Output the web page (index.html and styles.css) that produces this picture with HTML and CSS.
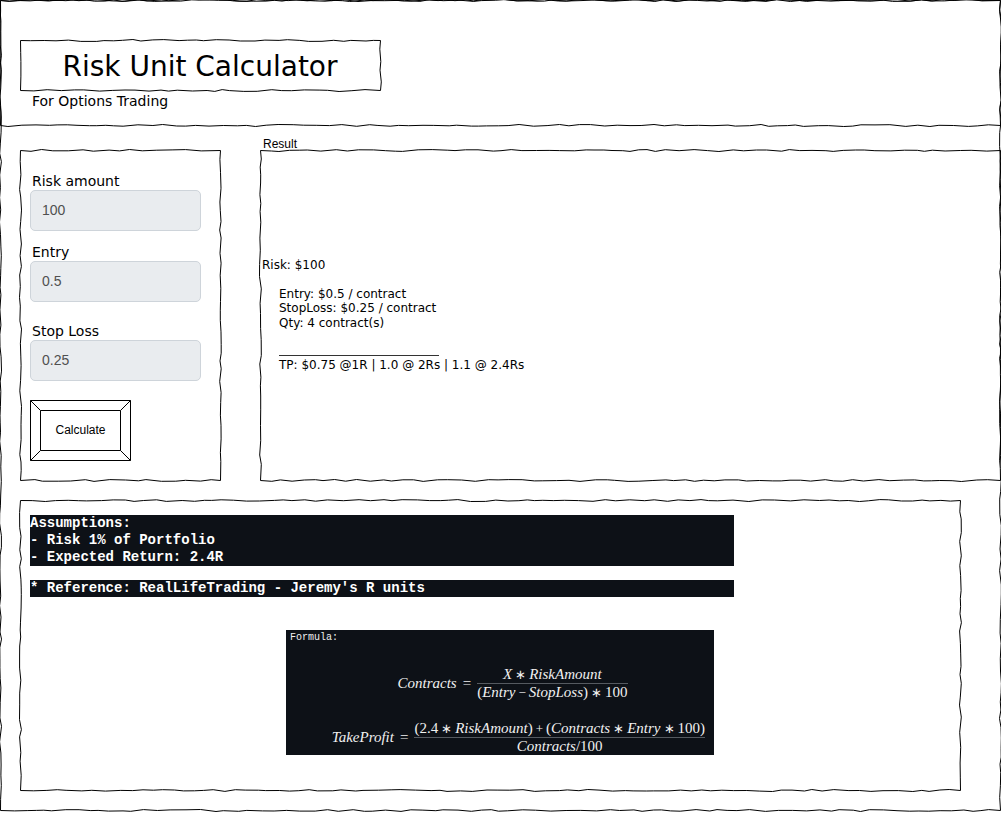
FILE: index.html
```
<!DOCTYPE html>
<html lang="en">
<head>
<meta charset="utf-8">
<meta name="viewport" content="width=device-width, initial-scale=1">
<title>Risk Unit Calculator</title>
<link rel="stylesheet" href="styles.css">
</head>
<body>
<div class="page sketch">
  <header class="header sketch">
    <h1 class="title sketch">Risk Unit Calculator</h1>
    <p class="subtitle">For Options Trading</p>
  </header>

  <main class="content">
    <form class="panel sketch">
      <div class="field">
        <label class="label" for="risk">Risk amount</label>
        <input class="input" id="risk" type="text" value="100">
      </div>
      <div class="field">
        <label class="label" for="entry">Entry</label>
        <input class="input" id="entry" type="text" value="0.5">
      </div>
      <div class="field field-spaced">
        <label class="label" for="stop">Stop Loss</label>
        <input class="input" id="stop" type="text" value="0.25">
      </div>
      <button class="button" type="button">
        <svg class="bevel" viewBox="0 0 101 61" aria-hidden="true"><path d="M.5 .5h100v60H.5zM10.5 10.5h80v40h-80zM.5 .5l10 10M100.5 .5l-10 10M.5 60.5l10-10M100.5 60.5l-10-10"/></svg>
        Calculate
      </button>
    </form>

    <section class="result">
      <h2 class="result-label">Result</h2>
      <div class="result-box sketch">
        <div class="result-text">
          <p>Risk: $100</p>
          <div class="result-lines">
            <p>Entry: $0.5 / contract</p>
            <p>StopLoss: $0.25 / contract</p>
            <p>Qty: 4 contract(s)</p>
            <hr class="rule">
            <p>TP: $0.75 @1R | 1.0 @ 2Rs | 1.1 @ 2.4Rs</p>
          </div>
        </div>
      </div>
    </section>
  </main>

  <section class="notes sketch">
    <div class="code">Assumptions:<br>- Risk 1% of Portfolio<br>- Expected Return: 2.4R</div>
    <div class="code">* Reference: RealLifeTrading - Jeremy's R units</div>
    <div class="formula">
      <p class="formula-label">Formula:</p>
      <div class="equation">
        <i>Contracts</i><span class="equals">=</span>
        <div class="fraction">
          <div class="numerator"><i>X</i><span class="op">∗</span><i>RiskAmount</i></div>
          <div class="denominator">(<i>Entry</i><span class="op">−</span><i>StopLoss</i>)<span class="op">∗</span>100</div>
        </div>
      </div>
      <div class="equation equation-wide">
        <i>TakeProfit</i><span class="equals">=</span>
        <div class="fraction">
          <div class="numerator">(2.4<span class="op">∗</span><i>RiskAmount</i>)<span class="op">+</span>(<i>Contracts</i><span class="op">∗</span><i>Entry</i><span class="op">∗</span>100)</div>
          <div class="denominator"><i>Contracts</i>/100</div>
        </div>
      </div>
    </div>
  </section>
</div>
<script src="sketch.js"></script>
</body>
</html>
```
FILE: styles.css
```
* {
  box-sizing: border-box;
}

body {
  margin: 0;
  padding: 0 1px 10px 0;
  background: #fff;
  color: #000;
  font-family: Verdana, "DejaVu Sans", sans-serif;
  font-size: 14px;
  overflow-x: hidden;
}

h1, h2, p {
  margin: 0;
  font-weight: 400;
}

/* Boxes with a hand-drawn outline; the outline itself comes from sketch.js */
.sketch {
  position: relative;
}

.outline {
  position: absolute;
  top: 0;
  left: 0;
  width: 100%;
  height: 100%;
  overflow: visible;
  pointer-events: none;
}

.outline path {
  fill: none;
  stroke: #000;
  stroke-width: 1;
}

.page {
  padding-bottom: 20px;
}

.header {
  padding: 40px 20px 14px;
}

.title {
  max-width: 360px;
  padding-top: 3px;
  font-size: 28px;
  line-height: 47px;
  text-align: center;
}

.subtitle {
  padding: 1px 0 0 12px;
  line-height: 20px;
}

.content {
  display: grid;
  grid-template-columns: 200px 1fr;
  gap: 40px;
  padding-left: 20px;
}

.panel {
  margin-top: 25px;
  padding: 22px 19px 19px 10px;
}

.field {
  display: flex;
  flex-direction: column;
  margin-bottom: 12px;
}

.field-spaced {
  margin: 20px 0 19px;
}

.label {
  padding-left: 2px;
  line-height: 18px;
}

.input {
  width: 100%;
  height: 41px;
  padding: 0 11px 2px;
  border: 1px solid #ced4da;
  border-radius: 5px;
  background: #e9ecef;
  color: #505050;
  font: 14px "Liberation Sans", Arial, sans-serif;
}

.button {
  position: relative;
  display: block;
  width: 101px;
  height: 61px;
  padding: 0 0 2px;
  border: 0;
  background: #fff;
  color: #000;
  font: 12px "Liberation Sans", Arial, sans-serif;
}

.bevel {
  position: absolute;
  inset: 0;
  fill: none;
  stroke: #000;
}

.result {
  display: flex;
  flex-direction: column;
}

.result-label {
  padding: 14px 0 0 3px;
  font: 12px/11px "Liberation Sans", Arial, sans-serif;
}

.result-box {
  flex: 1;
  display: flex;
  align-items: center;
  padding-left: 2px;
}

.result-text {
  font-size: 12px;
  line-height: 1.2;
}

.result-lines {
  padding: 15px 0 0 17px;
}

.rule {
  width: 160px;
  margin: 25px 0 2px;
  border: 0;
  border-top: 1px solid #333;
}

.notes {
  margin: 20px 40px 0 20px;
  padding: 15px 10px 35px;
}

.code {
  max-width: 704px;
  margin-bottom: 14px;
  background: #0d1117;
  color: #fff;
  font: bold 14px/17px "Liberation Mono", "Courier New", monospace;
}

/* The formula is centred on the page rather than on the notes box */
.formula {
  width: 428px;
  max-width: 100%;
  margin: 33px 0 0 calc(50% - 204px);
  padding: 2px 9px 0 4px;
  background: #0d1117;
  color: #f0f0f0;
  font: 15px/17px "Liberation Serif", "Times New Roman", serif;
}

.formula-label {
  margin-bottom: 3px;
  font: 10px/12px "Liberation Mono", monospace;
}

.equation {
  display: flex;
  align-items: center;
  justify-content: center;
  padding: 19px 0 0 30px;
}

.equation-wide {
  justify-content: flex-end;
}

.fraction {
  text-align: center;
  white-space: nowrap;
}

.numerator {
  border-bottom: 1px solid #555a60;
}

.equals {
  margin: 0 6px;
}

.op {
  margin: 0 3px;
  font-size: 13px;
}
```
FILE: sketch.js
```
// Draws a wobbly pen outline around every .sketch box.
function makeRandom(seed) {
  let s = seed * 7919 + 17;
  return () => {
    s = (s * 16807) % 2147483647;
    return s / 2147483647;
  };
}

function wobble(x1, y1, x2, y2, random) {
  const length = Math.hypot(x2 - x1, y2 - y1);
  const ux = (x2 - x1) / length;
  const uy = (y2 - y1) / length;
  let d = "";
  let at = 8 + random() * 10;
  let side = 1;
  while (at < length - 6) {
    const off = side * random();
    d += `L${(x1 + ux * at - uy * off).toFixed(1)} ${(y1 + uy * at + ux * off).toFixed(1)}`;
    at += 7 + random() * 9;
    if (random() > 0.35) side = -side;
  }
  return d + `L${x2} ${y2}`;
}

function drawOutline(box, path, seed) {
  const random = makeRandom(seed + 1);
  const r = box.offsetWidth + 0.5;
  const b = box.offsetHeight + 0.5;
  path.setAttribute("d", "M.5 .5" +
    wobble(0.5, 0.5, r, 0.5, random) +
    wobble(r, 0.5, r, b, random) +
    wobble(r, b, 0.5, b, random) +
    wobble(0.5, b, 0.5, 0.5, random) + "Z");
}

document.querySelectorAll(".sketch").forEach((box, seed) => {
  const ns = "http://www.w3.org/2000/svg";
  const svg = document.createElementNS(ns, "svg");
  const path = document.createElementNS(ns, "path");
  svg.setAttribute("class", "outline");
  svg.setAttribute("aria-hidden", "true");
  svg.append(path);
  box.append(svg);
  drawOutline(box, path, seed);
  new ResizeObserver(() => drawOutline(box, path, seed)).observe(box);
});
```
